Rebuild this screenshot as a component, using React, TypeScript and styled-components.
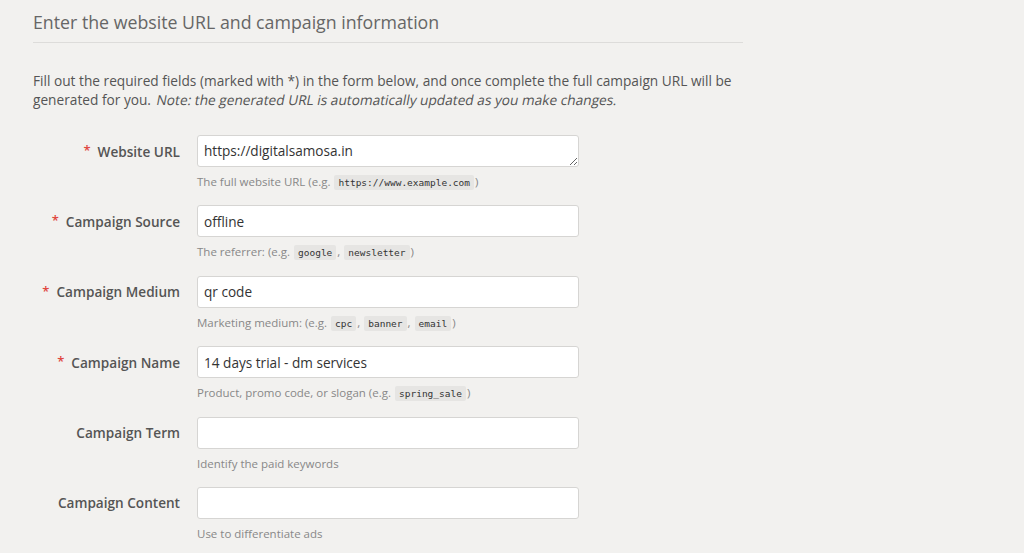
import React from "react";
import styled, { createGlobalStyle } from "styled-components";

const Global = createGlobalStyle`
  html, body { margin: 0; padding: 0; }
  body {
    background: #f2f1ef;
    font-family: "Open Sans", "Noto Sans", sans-serif;
    color: #555;
  }
`;

const Page = styled.div`
  width: 710px;
  padding: 10px 0 0 33px;
`;

const Heading = styled.h2`
  margin: 0;
  font-size: 17.75px;
  line-height: 24px;
  font-weight: 400;
  color: #666;
  padding-bottom: 8px;
  border-bottom: 1px solid #dddcda;
`;

const Intro = styled.p`
  margin: 28px 0 26px;
  font-size: 13.7px;
  line-height: 19px;
  color: #555;
`;

const Note = styled.span`
  display: inline-block;
  transform: skewX(-11deg);
  transform-origin: bottom left;
`;

const Form = styled.div`
  display: flex;
  flex-direction: column;
  gap: 16.4px;
`;

const Row = styled.div`
  display: grid;
  grid-template-columns: 147px 382px;
  column-gap: 17px;
  align-items: start;
`;

const Label = styled.label`
  height: 32px;
  display: flex;
  align-items: center;
  justify-content: flex-end;
  font-size: 13.6px;
  font-weight: 600;
  color: #555;
  white-space: nowrap;
`;

const Star = styled.span`
  color: #e0473f;
  font-size: 13px;
  margin-right: 7px;
  position: relative;
  top: -1px;
`;

const Field = styled.div`
  display: flex;
  flex-direction: column;
`;

const inputStyles = `
  box-sizing: border-box;
  width: 382px;
  height: 32px;
  border: 1px solid #d6d5d3;
  border-radius: 3px;
  background: #fff;
  padding: 0 6px;
  font-family: "Open Sans", "Noto Sans", sans-serif;
  font-size: 13.6px;
  color: #333;
  outline: none;
`;

const Input = styled.input`
  ${inputStyles}
`;

const TextArea = styled.textarea`
  ${inputStyles}
  padding: 5px 6px;
  line-height: 20px;
  resize: vertical;
  overflow: hidden;
  display: block;
`;

const Help = styled.div`
  margin-top: 7px;
  height: 15px;
  font-size: 11.5px;
  line-height: 15px;
  color: #888;
  white-space: nowrap;
`;

const Code = styled.code`
  font-family: "DejaVu Sans Mono", "Liberation Mono", monospace;
  font-size: 9.5px;
  line-height: 1;
  color: #333;
  background: #e6e5e3;
  border-radius: 2px;
  padding: 2px 4px;
  margin: 0 1px;
`;

type Item = {
  label: string;
  required: boolean;
  value: string;
  help: React.ReactNode;
  area?: boolean;
};

const items: Item[] = [
  {
    label: "Website URL",
    required: true,
    value: "https://digitalsamosa.in",
    area: true,
    help: (
      <>
        The full website URL (e.g. <Code>https://www.example.com</Code>)
      </>
    ),
  },
  {
    label: "Campaign Source",
    required: true,
    value: "offline",
    help: (
      <>
        The referrer: (e.g. <Code>google</Code>, <Code>newsletter</Code>)
      </>
    ),
  },
  {
    label: "Campaign Medium",
    required: true,
    value: "qr code",
    help: (
      <>
        Marketing medium: (e.g. <Code>cpc</Code>, <Code>banner</Code>,{" "}
        <Code>email</Code>)
      </>
    ),
  },
  {
    label: "Campaign Name",
    required: true,
    value: "14 days trial - dm services",
    help: (
      <>
        Product, promo code, or slogan (e.g. <Code>spring_sale</Code>)
      </>
    ),
  },
  {
    label: "Campaign Term",
    required: false,
    value: "",
    help: <>Identify the paid keywords</>,
  },
  {
    label: "Campaign Content",
    required: false,
    value: "",
    help: <>Use to differentiate ads</>,
  },
];

export default function App() {
  return (
    <>
      <Global />
      <Page>
        <Heading>Enter the website URL and campaign information</Heading>
        <Intro>
          Fill out the required fields (marked with *) in the form below, and
          once complete the full campaign URL will be generated for you.{" "}
          <Note>
            Note: the generated URL is automatically updated as you make
            changes.
          </Note>
        </Intro>
        <Form>
          {items.map((it) => (
            <Row key={it.label}>
              <Label>
                {it.required && <Star>*</Star>}
                {it.label}
              </Label>
              <Field>
                {it.area ? (
                  <TextArea defaultValue={it.value} rows={1} />
                ) : (
                  <Input defaultValue={it.value} />
                )}
                <Help>{it.help}</Help>
              </Field>
            </Row>
          ))}
        </Form>
      </Page>
    </>
  );
}
